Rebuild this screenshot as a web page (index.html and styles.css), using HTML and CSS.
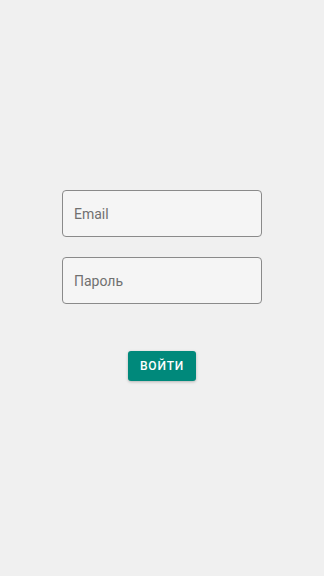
FILE: index.html
```html
<!DOCTYPE html>
<html lang="ru">
<head>
  <meta charset="UTF-8">
  <meta name="viewport" content="width=device-width, initial-scale=1.0">
  <title>Вход</title>
  <link rel="stylesheet" href="styles.css">
</head>
<body>
  <form class="login">
    <input class="field" type="email" placeholder="Email">
    <input class="field" type="password" placeholder="Пароль">
    <button class="submit" type="button">Войти</button>
  </form>
</body>
</html>
```

FILE: styles.css
```css
html, body {
  height: 100%;
}
body {
  font-family: Roboto, "Noto Sans", sans-serif;
  background-color: #f0f0f0;
  margin: 0;
  display: flex;
  align-items: center;
  justify-content: center;
}
.login {
  display: flex;
  flex-direction: column;
  align-items: center;
  width: 200px;
  margin-top: -5px;
}
.field {
  box-sizing: border-box;
  width: 200px;
  height: 47px;
  margin-bottom: 20px;
  padding: 0 11px;
  font-family: inherit;
  font-size: 14px;
  color: #333;
  background-color: #f5f5f5;
  border: 1px solid #8a8a8a;
  border-radius: 4px;
  outline: none;
}
.field::placeholder {
  color: #707070;
}
.submit {
  margin-top: 27px;
  height: 30px;
  width: 68px;
  padding: 0;
  font-family: inherit;
  font-size: 12px;
  font-weight: 500;
  letter-spacing: 0.8px;
  text-transform: uppercase;
  color: #fff;
  background-color: #00897b;
  border: none;
  border-radius: 3px;
  box-shadow: 0 1px 3px rgba(0, 0, 0, 0.25);
  cursor: pointer;
}
```
